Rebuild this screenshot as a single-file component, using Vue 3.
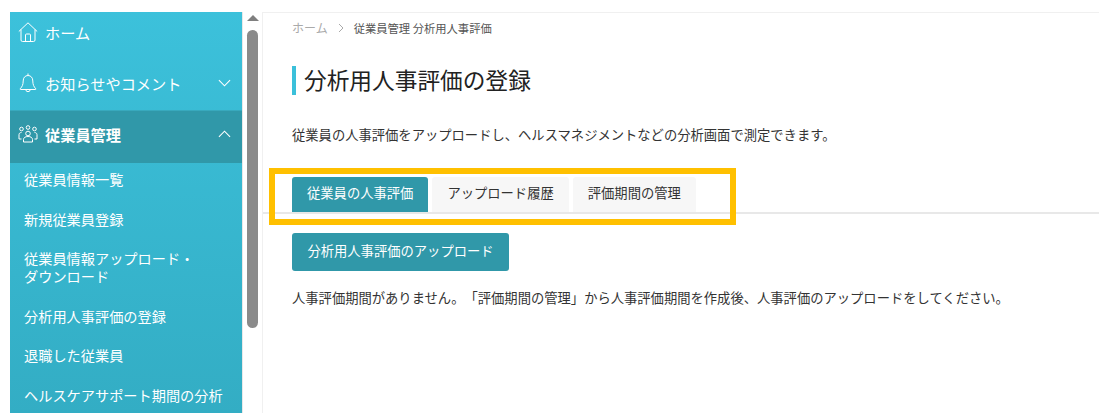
<script setup>
const subItems = [
  '従業員情報一覧',
  '新規従業員登録',
  '従業員情報アップロード・\nダウンロード',
  '分析用人事評価の登録',
  '退職した従業員',
  'ヘルスケアサポート期間の分析'
]
const tabs = ['従業員の人事評価', 'アップロード履歴', '評価期間の管理']
</script>

<template>
  <div class="page">
    <aside class="sidebar">
      <nav class="nav">
        <div class="nav-item home">
          <svg class="nav-icon" viewBox="0 0 20 20" fill="none" stroke="currentColor" stroke-width="1">
            <path d="M.8 9.500 10 .8l9.200 8.700M3 7.500v10.500a1.500 1.500 0 0 0 1.500 1.500h11a1.500 1.500 0 0 0 1.500-1.500V7.500" />
            <path d="M7.500 19.500V13a1 1 0 0 1 1-1h3a1 1 0 0 1 1 1v6.500" />
          </svg>
          <span>ホーム</span>
        </div>
        <div class="nav-item notice">
          <svg class="nav-icon" viewBox="0 0 20 20" fill="none" stroke="currentColor" stroke-width="1">
            <path d="M10 2.500c-3 0-4.800 2.300-4.800 5.500 0 3.600-1 5.600-3 7.800-.3.400 0 .7.400.7h14.800c.4 0 .7-.3.400-.7-2-2.200-3-4.200-3-7.800 0-3.200-1.800-5.500-4.800-5.500z" />
            <path d="M10 .5v2M7.800 16.500a2.200 2.200 0 0 0 4.400 0" />
          </svg>
          <span class="nav-label">お知らせやコメント</span>
          <svg class="chev" viewBox="0 0 14 8" fill="none" stroke="currentColor" stroke-width="1.200">
            <path d="M1 1l6 6 6-6" />
          </svg>
        </div>
        <div class="nav-item active">
          <svg class="nav-icon" viewBox="0 0 20 20" fill="none" stroke="currentColor" stroke-width="1">
            <circle cx="10" cy="3.500" r="1.800" />
            <circle cx="3.500" cy="5" r="1.800" />
            <circle cx="16.500" cy="5" r="1.800" />
            <circle cx="10" cy="9.500" r="2.300" />
            <path d="M5.500 18v-2.500c0-2 2-3 4.500-3s4.500 1 4.500 3V18zM3.500 15H1v-4.300c0-1.300 1-2.200 2.500-2.200M16.500 15H19v-4.300c0-1.300-1-2.200-2.500-2.200" />
          </svg>
          <span class="nav-label">従業員管理</span>
          <svg class="chev" viewBox="0 0 14 8" fill="none" stroke="currentColor" stroke-width="1.200">
            <path d="M1 7l6-6 6 6" />
          </svg>
        </div>
        <ul class="sub-list">
          <li v-for="item in subItems" :key="item" class="sub-item">{{ item }}</li>
        </ul>
      </nav>
      <div class="scrollbar">
        <div class="scroll-arrow"></div>
        <div class="scroll-thumb"></div>
      </div>
    </aside>

    <main class="main">
      <div class="breadcrumb">
        <span class="crumb-home">ホーム</span>
        <svg class="crumb-sep" viewBox="0 0 6 10" fill="none" stroke="#aaa" stroke-width="1">
          <path d="M1 1l4 4-4 4" />
        </svg>
        <span>従業員管理 分析用人事評価</span>
      </div>
      <h1 class="title">分析用人事評価の登録</h1>
      <p class="lead">従業員の人事評価をアップロードし、ヘルスマネジメントなどの分析画面で測定できます。</p>
      <div class="tabs">
        <div v-for="(tab, i) in tabs" :key="tab" class="tab" :class="{ selected: i === 0 }">{{ tab }}</div>
      </div>
      <div class="panel">
        <button class="upload-btn">分析用人事評価のアップロード</button>
        <p class="empty">人事評価期間がありません。「評価期間の管理」から人事評価期間を作成後、人事評価のアップロードをしてください。</p>
      </div>
      <div class="highlight"></div>
    </main>
  </div>
</template>

<style scoped>
.page {
  display: flex;
  height: 413px;
  overflow: hidden;
  background: #fff;
  padding: 12px 0 0 10px;
  box-sizing: border-box;
  font-family: "Noto Sans CJK JP", "Noto Sans", sans-serif;
  color: #333;
  text-spacing-trim: space-all;
}

.sidebar {
  display: flex;
  flex-shrink: 0;
  height: 401px;
}

.nav {
  width: 232px;
  background: linear-gradient(180deg, #3cc1db 0%, #33adc4 100%);
  color: #fff;
}

.nav-item {
  display: flex;
  align-items: center;
  padding: 0 11px 0 8px;
  font-size: 15.200px;
  box-sizing: border-box;
}

.home {
  height: 46px;
  padding-bottom: 6px;
}

.notice {
  height: 52px;
  padding-bottom: 3px;
}

.active {
  height: 53px;
  padding-bottom: 7px;
  background: #3098a9;
  font-weight: 700;
  border-top: 1px solid #38a9bd;
}

.nav-icon {
  width: 20px;
  height: 20px;
  margin-right: 7px;
  flex-shrink: 0;
}

.nav-label {
  flex: 1;
}

.chev {
  width: 13px;
  height: 8px;
}

.sub-list {
  list-style: none;
  margin: 0;
  padding: 7px 0 0 14px;
}

.sub-item {
  font-size: 14.200px;
  line-height: 18px;
  margin-bottom: 21.500px;
  white-space: pre-line;
}

.scrollbar {
  width: 20px;
  background: #fff;
  border-left: 1px solid #e8e8e8;
  box-sizing: border-box;
  display: flex;
  flex-direction: column;
  align-items: center;
}

.scroll-arrow {
  width: 0;
  height: 0;
  margin-top: 3px;
  border-left: 6px solid transparent;
  border-right: 6px solid transparent;
  border-bottom: 6px solid #7f7f7f;
}

.scroll-thumb {
  width: 11px;
  height: 298px;
  margin-top: 9px;
  background: #8a8a8a;
  border-radius: 6px;
}

.main {
  position: relative;
  flex: 1;
  height: 401px;
  border-top: 1px solid #f0f0f0;
  border-left: 1px solid #f0f0f0;
  box-sizing: border-box;
  padding-top: 5px;
  min-width: 0;
}

.breadcrumb {
  display: flex;
  align-items: center;
  height: 19px;
  padding-left: 29px;
  font-size: 11.300px;
  color: #555;
}

.crumb-home {
  color: #aaa;
  font-size: 12px;
}

.crumb-sep {
  width: 6px;
  height: 10px;
  margin: 0 10px 0 10px;
}

.title {
  margin: 29px 0 0 29px;
  padding: 0 0 1px 8px;
  border-left: 4px solid #3bc0da;
  font-size: 22.700px;
  font-weight: 400;
  line-height: 28px;
  color: #222;
}

.lead {
  margin: 30px 0 0 29px;
  font-size: 13.300px;
  line-height: 19px;
  color: #333;
}

.tabs {
  display: flex;
  gap: 4px;
  margin-top: 33px;
  padding-left: 29px;
  border-bottom: 2px solid #e8e8e8;
}

.tab {
  height: 35px;
  line-height: 31px;
  padding: 0 15px;
  text-align: center;
  font-size: 13.300px;
  background: #f7f7f7;
  color: #333;
  border-radius: 3px 3px 0 0;
}

.tab.selected {
  background: #3098a9;
  color: #fff;
}

.panel {
  padding: 19px 0 0 29px;
}

.upload-btn {
  display: block;
  width: 217px;
  height: 38px;
  border: 0;
  border-radius: 3px;
  background: #3098a9;
  color: #fff;
  font: inherit;
  font-size: 13.300px;
  padding: 0 0 3px;
}

.empty {
  margin: 17px 0 0;
  font-size: 13.300px;
  line-height: 19px;
  color: #333;
}

.highlight {
  position: absolute;
  left: 6px;
  top: 155px;
  width: 467px;
  height: 57px;
  box-sizing: border-box;
  border: 6px solid #ffc000;
  pointer-events: none;
}
</style>
